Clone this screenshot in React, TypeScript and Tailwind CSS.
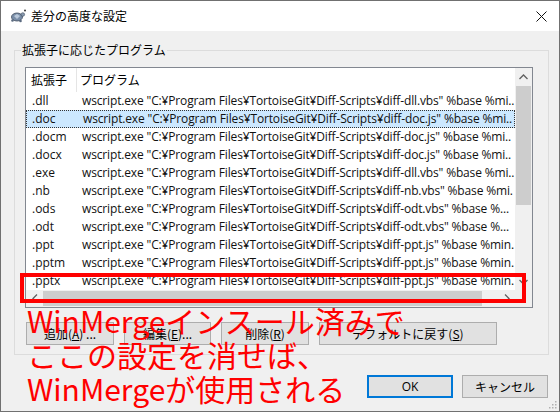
import React from "react";

const rows: [string, string][] = [
  [".dll", 'wscript.exe "C:¥Program Files¥TortoiseGit¥Diff-Scripts¥diff-dll.vbs" %base %mi..'],
  [".doc", 'wscript.exe "C:¥Program Files¥TortoiseGit¥Diff-Scripts¥diff-doc.js" %base %mi..'],
  [".docm", 'wscript.exe "C:¥Program Files¥TortoiseGit¥Diff-Scripts¥diff-doc.js" %base %mi..'],
  [".docx", 'wscript.exe "C:¥Program Files¥TortoiseGit¥Diff-Scripts¥diff-doc.js" %base %mi..'],
  [".exe", 'wscript.exe "C:¥Program Files¥TortoiseGit¥Diff-Scripts¥diff-dll.vbs" %base %mi..'],
  [".nb", 'wscript.exe "C:¥Program Files¥TortoiseGit¥Diff-Scripts¥diff-nb.vbs" %base %mi.'],
  [".ods", 'wscript.exe "C:¥Program Files¥TortoiseGit¥Diff-Scripts¥diff-odt.vbs" %base %...'],
  [".odt", 'wscript.exe "C:¥Program Files¥TortoiseGit¥Diff-Scripts¥diff-odt.vbs" %base %...'],
  [".ppt", 'wscript.exe "C:¥Program Files¥TortoiseGit¥Diff-Scripts¥diff-ppt.js" %base %min.'],
  [".pptm", 'wscript.exe "C:¥Program Files¥TortoiseGit¥Diff-Scripts¥diff-ppt.js" %base %min.'],
  [".pptx", 'wscript.exe "C:¥Program Files¥TortoiseGit¥Diff-Scripts¥diff-ppt.js" %base %min.'],
];

const ui = "font-['Open_Sans','Noto_Sans_CJK_JP',sans-serif]";

function Turtle() {
  return (
    <svg width="16" height="14" viewBox="0 0 16 14">
      <ellipse cx="7" cy="8" rx="5.5" ry="4" fill="#7a8ea8" stroke="#3d4a5c" strokeWidth="0.8" />
      <path d="M4 7 L7 5 L10 7 L7 10 Z" fill="#b9c8da" />
      <circle cx="12.8" cy="5.5" r="1.8" fill="#8a9bb0" stroke="#3d4a5c" strokeWidth="0.6" />
      <circle cx="2.5" cy="11.5" r="1.3" fill="#5b6b80" />
      <circle cx="10.5" cy="12" r="1.3" fill="#5b6b80" />
      <circle cx="15" cy="1.5" r="1" fill="#333" />
    </svg>
  );
}

function Btn({ children, w, focus }: { children: React.ReactNode; w: string; focus?: boolean }) {
  return (
    <div
      className={`${w} h-[23px] flex items-center justify-center text-[12px] text-black bg-[#e1e1e1] ${
        focus ? "border-2 border-[#0078d7]" : "border border-[#adadad]"
      }`}
    >
      {children}
    </div>
  );
}

export default function App() {
  return (
    <div className={`relative w-[560px] h-[412px] overflow-hidden border border-[#707070] bg-[#f0f0f0] ${ui}`}>
      {/* title bar */}
      <div className="h-[30px] bg-white flex items-center pl-[9px] pr-[10px]">
        <Turtle />
        <span className="ml-[5px] text-[12px] text-black font-['Noto_Sans_CJK_JP',sans-serif]">差分の高度な設定</span>
        <div className="ml-auto mr-[2px]">
          <svg width="11" height="11" viewBox="0 0 11 11">
            <path d="M0.5 0.5 L10.5 10.5 M10.5 0.5 L0.5 10.5" stroke="#111" strokeWidth="1" />
          </svg>
        </div>
      </div>

      {/* group box */}
      <div className="relative ml-[13px] mt-[19px] w-[535px] h-[305px] border border-[#dcdcdc] pl-[10px] pt-[16px]">
        <div className="absolute left-[6px] top-[-10px] px-[1px] bg-[#f0f0f0] text-[12px] leading-[18px] text-black font-['Noto_Sans_CJK_JP',sans-serif]">
          拡張子に応じたプログラム
        </div>

        {/* list */}
        <div className="w-[508px] h-[241px] border border-[#828790] bg-white flex flex-col">
          <div className="flex h-[222px]">
            <div className="w-[489px] flex flex-col overflow-hidden">
              <div className="h-[24px] flex items-center text-[12px] text-black">
                <div className="w-[51px] h-full flex items-center pl-[5px] border-r border-[#e5e5e5] font-['Noto_Sans_CJK_JP',sans-serif]">
                  拡張子
                </div>
                <div className="pl-[3px] font-['Noto_Sans_CJK_JP',sans-serif]">プログラム</div>
              </div>
              {rows.map(([ext, prog], i) => (
                <div
                  key={ext}
                  className={`h-[18px] flex items-center text-[12px] text-[#111] whitespace-nowrap ${
                    i === 1 ? "bg-[#cce8ff] border border-dotted border-[#333]" : ""
                  }`}
                >
                  <div className={`w-[51px] shrink-0 ${i === 1 ? "pl-[5px]" : "pl-[6px]"}`}>{ext}</div>
                  <div className="pl-[5px] tracking-[-0.15px]">{prog}</div>
                </div>
              ))}
            </div>
            {/* vertical scrollbar */}
            <div className="w-[17px] bg-[#f0f0f0] flex flex-col items-center">
              <div className="h-[17px] flex items-center justify-center">
                <svg width="9" height="6" viewBox="0 0 9 6">
                  <path d="M0.5 5 L4.5 1 L8.5 5" stroke="#606060" strokeWidth="1.3" fill="none" />
                </svg>
              </div>
              <div className="mt-[1px] w-[15px] h-[119px] bg-[#cdcdcd]" />
              <div className="mt-auto h-[17px] flex items-center justify-center">
                <svg width="9" height="6" viewBox="0 0 9 6">
                  <path d="M0.5 1 L4.5 5 L8.5 1" stroke="#606060" strokeWidth="1.3" fill="none" />
                </svg>
              </div>
            </div>
          </div>
          {/* horizontal scrollbar */}
          <div className="flex h-[17px]">
            <div className="w-[489px] bg-[#f0f0f0] flex items-center">
              <div className="w-[17px] h-full flex items-center justify-center">
                <svg width="6" height="9" viewBox="0 0 6 9">
                  <path d="M5 0.5 L1 4.5 L5 8.5" stroke="#606060" strokeWidth="1.3" fill="none" />
                </svg>
              </div>
              <div className="w-[439px] h-[15px] bg-[#cdcdcd]" />
              <div className="ml-auto w-[17px] h-full flex items-center justify-center">
                <svg width="6" height="9" viewBox="0 0 6 9">
                  <path d="M1 0.5 L5 4.5 L1 8.5" stroke="#606060" strokeWidth="1.3" fill="none" />
                </svg>
              </div>
            </div>
            <div className="w-[17px] bg-[#f0f0f0]" />
          </div>
        </div>

        {/* buttons */}
        <div className="flex mt-[14px] pl-[1px] gap-[10px] font-['Noto_Sans_CJK_JP',sans-serif]">
          <Btn w="w-[88px]">
            追加(<span className="underline">A</span>) ...
          </Btn>
          <Btn w="w-[87px]">
            編集(<span className="underline">E</span>)...
          </Btn>
          <Btn w="w-[88px]">
            削除(<span className="underline">R</span>)
          </Btn>
          <Btn w="w-[178px]">
            デフォルトに戻す(<span className="underline">S</span>)
          </Btn>
        </div>
      </div>

      {/* bottom buttons */}
      <div className="flex justify-end gap-[9px] mt-[20px] pr-[11px]">
        <Btn w="w-[86px]" focus>
          OK
        </Btn>
        <div className="font-['Noto_Sans_CJK_JP',sans-serif]">
          <Btn w="w-[86px]">キャンセル</Btn>
        </div>
      </div>

      {/* size grip */}
      <svg className="absolute right-[2px] bottom-[2px]" width="8" height="8" viewBox="0 0 8 8">
        <rect x="6" y="0" width="1.5" height="1.5" fill="#b0b0b0" />
        <rect x="3" y="3" width="1.5" height="1.5" fill="#b0b0b0" />
        <rect x="6" y="3" width="1.5" height="1.5" fill="#b0b0b0" />
        <rect x="0" y="6" width="1.5" height="1.5" fill="#b0b0b0" />
        <rect x="3" y="6" width="1.5" height="1.5" fill="#b0b0b0" />
        <rect x="6" y="6" width="1.5" height="1.5" fill="#b0b0b0" />
      </svg>

      {/* red annotation overlay */}
      <div className="absolute left-[19px] top-[272px] w-[506px] h-[30px] border-[4px] border-[#ff0000]" />
      <div className="absolute left-[26px] top-[302px] text-[30px] leading-[34px] font-normal text-[#ff0000] whitespace-nowrap font-['Noto_Sans_CJK_JP',sans-serif]">
        <div>WinMergeインスール済みで</div>
        <div>ここの設定を消せば、</div>
        <div>WinMergeが使用される</div>
      </div>
    </div>
  );
}
